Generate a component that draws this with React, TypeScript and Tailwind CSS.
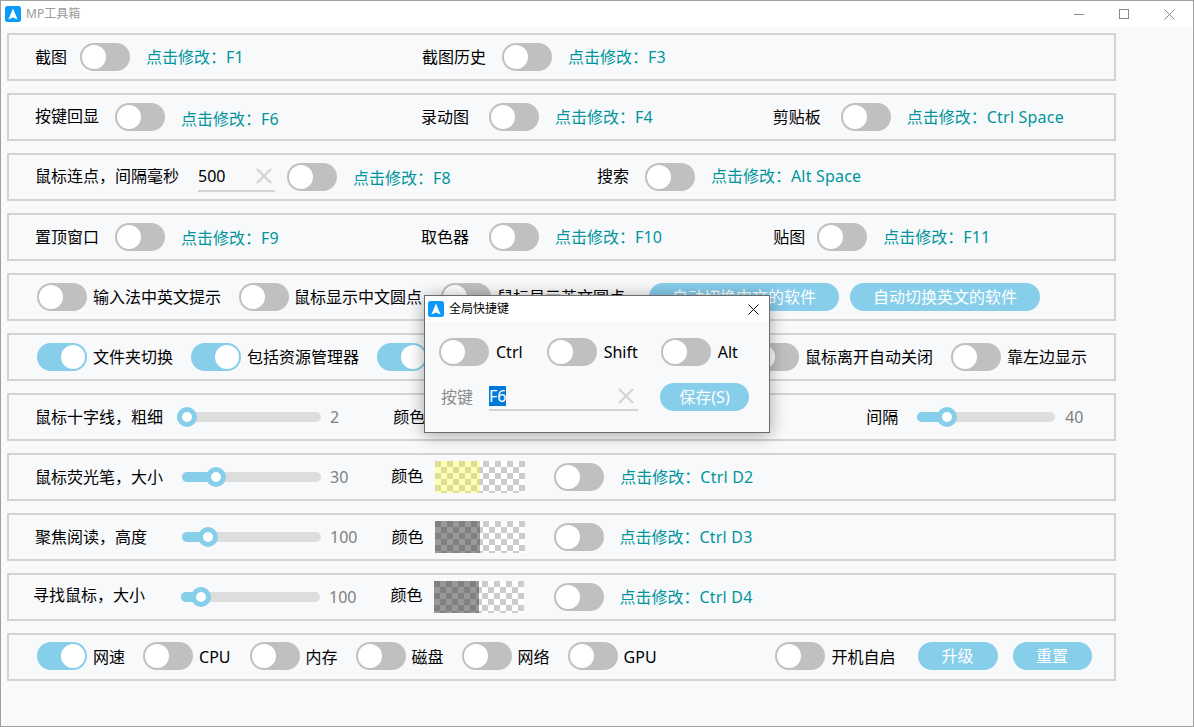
const font = { fontFamily: '"Noto Sans", "Noto Sans CJK SC", sans-serif' };

function Logo() {
  return (
    <svg viewBox="0 0 16 16" className="h-4 w-4 shrink-0">
      <rect width="16" height="16" rx="2.5" fill="#0a9bfa" />
      <path d="M8 2.5 L12.6 13.5 L8 11.6 L3.4 13.5 Z" fill="#fff" />
    </svg>
  );
}

function Toggle({ on = false, className = '' }: { on?: boolean; className?: string }) {
  if (on) {
    return (
      <div className={`flex h-[28px] w-[50px] shrink-0 items-center justify-end rounded-full bg-[#87ceeb] pr-[2px] ${className}`}>
        <div className="h-[24px] w-[24px] rounded-full bg-white" />
      </div>
    );
  }
  return (
    <div className={`flex h-[28px] w-[50px] shrink-0 items-center rounded-full bg-[#c0c0c0] pl-[2px] ${className}`}>
      <div className="h-[24px] w-[24px] rounded-full bg-white" />
    </div>
  );
}

function Label({ children, className = '' }: { children: React.ReactNode; className?: string }) {
  return <span className={`shrink-0 whitespace-nowrap text-[16px] leading-[22px] text-black ${className}`}>{children}</span>;
}

function HotKey({ children, className = '' }: { children: React.ReactNode; className?: string }) {
  return (
    <span className={`shrink-0 whitespace-nowrap text-[16px] leading-[22px] text-[#00959c] ${className}`}>
      点击修改：<span className="tracking-[0.2px]">{children}</span>
    </span>
  );
}

function Pill({ children, className = '' }: { children: React.ReactNode; className?: string }) {
  return (
    <div className={`flex h-[28px] shrink-0 items-center justify-center rounded-full bg-[#87ceeb] text-[16px] text-white ${className}`}>
      {children}
    </div>
  );
}

function Slider({ width, percent, className = '' }: { width: number; percent: number; className?: string }) {
  return (
    <div className={`relative h-[10px] shrink-0 rounded-full bg-[#dddddd] ${className}`} style={{ width }}>
      <div className="h-full rounded-full bg-[#87ceeb]" style={{ width: percent + 10 }} />
      <div
        className="absolute top-[-5px] h-[20px] w-[20px] rounded-full border-[5px] border-[#87ceeb] bg-white"
        style={{ left: percent }}
      />
    </div>
  );
}

function Swatch({ dark = false, yellow = false, className = '' }: { dark?: boolean; yellow?: boolean; className?: string }) {
  const left = yellow
    ? 'bg-[repeating-conic-gradient(#ffffb3_0_25%,#dddd99_0_50%)]'
    : dark
      ? 'bg-[repeating-conic-gradient(#999999_0_25%,#808080_0_50%)]'
      : '';
  return (
    <div className={`flex h-[32px] w-[90px] shrink-0 ${className}`}>
      <div className={`h-full w-[45px] bg-size-[12px_12px] ${left}`} />
      <div className="h-full w-[45px] bg-[repeating-conic-gradient(#cccccc_0_25%,#ffffff_0_50%)] bg-size-[12px_12px] [background-position:-3px_0]" />
    </div>
  );
}

function Row({ children }: { children: React.ReactNode }) {
  return (
    <div className="flex h-[48px] w-[1109px] items-center border-2 border-[#d3d3d6] pl-[27px]">
      {children}
    </div>
  );
}

function Cross({ className = '' }: { className?: string }) {
  return (
    <svg viewBox="0 0 16 16" className={`h-4 w-4 shrink-0 ${className}`} fill="none" stroke="#d3d3d3" strokeWidth="2.2">
      <path d="M1 1 L15 15 M15 1 L1 15" />
    </svg>
  );
}

function Dialog() {
  return (
    <div className="absolute left-[423px] top-[294px] h-[138px] w-[346px] border border-[#6b6b6b] bg-[#f8f9fb] shadow-[0_2px_16px_rgba(0,0,0,0.35)]">
      <div className="flex h-[26px] items-center bg-white pl-[3px] pr-[10px]">
        <Logo />
        <span className="ml-[5px] text-[12px] text-black">全局快捷键</span>
        <svg viewBox="0 0 11 11" className="ml-auto h-[11px] w-[11px]" fill="none" stroke="#111" strokeWidth="1">
          <path d="M0.5 0.5 L10.5 10.5 M10.5 0.5 L0.5 10.5" />
        </svg>
      </div>
      <div className="mt-[16px] flex items-center pl-[14px]">
        <Toggle />
        <Label className="ml-[7px]">Ctrl</Label>
        <Toggle className="ml-[24px]" />
        <Label className="ml-[7px]">Shift</Label>
        <Toggle className="ml-[23px]" />
        <Label className="ml-[7px]">Alt</Label>
      </div>
      <div className="mt-[16px] flex items-center pl-[16px]">
        <span className="text-[16px] leading-[22px] text-[#8a8a8a]">按键</span>
        <div className="ml-[16px] flex h-[29px] w-[149px] items-center border-b-2 border-[#d3d3d3]">
          <span className="bg-[#0078d7] text-[16px] leading-[20px] text-white">F6</span>
          <Cross className="ml-auto mr-[4px]" />
        </div>
        <Pill className="ml-[22px] w-[89px] text-[15px]">保存(S)</Pill>
      </div>
    </div>
  );
}

export default function App() {
  return (
    <div className="relative h-[727px] w-[1194px] overflow-hidden border border-[#a0a0a0] bg-[#f8f9fb]" style={font}>
      {/* title bar */}
      <div className="flex h-[26px] items-center bg-white pl-[4px] pr-[18px]">
        <Logo />
        <span className="ml-[5px] text-[12px] text-[#9a9a9a]">MP工具箱</span>
        <div className="ml-auto flex items-center gap-[35px]">
          <div className="h-px w-[10px] bg-[#8a8a8a]" />
          <div className="h-[10px] w-[10px] border border-[#8a8a8a]" />
          <svg viewBox="0 0 11 11" className="h-[11px] w-[11px]" fill="none" stroke="#8a8a8a" strokeWidth="1">
            <path d="M0.5 0.5 L10.5 10.5 M10.5 0.5 L0.5 10.5" />
          </svg>
        </div>
      </div>

      <div className="flex flex-col gap-[12px] pl-[6px] pt-[6px]">
        <Row>
          <Label className="ml-[-1px]">截图</Label>
          <Toggle className="ml-[13px]" />
          <HotKey className="ml-[16px]">F1</HotKey>
          <Label className="ml-[178px]">截图历史</Label>
          <Toggle className="ml-[16px]" />
          <HotKey className="ml-[16px]">F3</HotKey>
        </Row>
        <Row>
          <Label className="ml-[-1px] mb-[2px]">按键回显</Label>
          <Toggle className="ml-[16px]" />
          <HotKey className="ml-[16px] mt-[3px]">F6</HotKey>
          <Label className="ml-[142px]">录动图</Label>
          <Toggle className="ml-[20px]" />
          <HotKey className="ml-[16px]">F4</HotKey>
          <Label className="ml-[120px]">剪贴板</Label>
          <Toggle className="ml-[20px]" />
          <HotKey className="ml-[16px]">Ctrl Space</HotKey>
        </Row>
        <Row>
          <Label className="ml-[-1px] mb-[2px]">鼠标连点，间隔毫秒</Label>
          <div className="ml-[19px] flex h-[30px] w-[77px] shrink-0 items-center border-b-2 border-[#d3d3d3]">
            <span className="text-[16px] text-black">500</span>
            <Cross className="ml-auto mr-[3px]" />
          </div>
          <Toggle className="ml-[12px]" />
          <HotKey className="ml-[16px] mt-[2px]">F8</HotKey>
          <Label className="ml-[146px] mb-[2px]">搜索</Label>
          <Toggle className="ml-[16px]" />
          <HotKey className="ml-[16px] mb-[2px]">Alt Space</HotKey>
        </Row>
        <Row>
          <Label className="ml-[-1px]">置顶窗口</Label>
          <Toggle className="ml-[16px]" />
          <HotKey className="ml-[16px] mt-[2px]">F9</HotKey>
          <Label className="ml-[142px]">取色器</Label>
          <Toggle className="ml-[20px]" />
          <HotKey className="ml-[16px]">F10</HotKey>
          <Label className="ml-[111px]">贴图</Label>
          <Toggle className="ml-[12px]" />
          <HotKey className="ml-[16px]">F11</HotKey>
        </Row>
        <Row>
          <Toggle className="ml-[1px]" />
          <Label className="ml-[6px]">输入法中英文提示</Label>
          <Toggle className="ml-[18px]" />
          <Label className="ml-[5px]">鼠标显示中文圆点</Label>
          <Toggle className="ml-[19px]" />
          <Label className="ml-[6px]">鼠标显示英文圆点</Label>
          <Pill className="ml-[24px] w-[190px]">自动切换中文的软件</Pill>
          <Pill className="ml-[11px] w-[190px]">自动切换英文的软件</Pill>
        </Row>
        <Row>
          <Toggle on className="ml-[1px]" />
          <Label className="ml-[6px]">文件夹切换</Label>
          <Toggle on className="ml-[18px]" />
          <Label className="ml-[6px]">包括资源管理器</Label>
          <Toggle on className="ml-[18px]" />
          <Toggle className="ml-[322px]" />
          <Label className="ml-[6px]">鼠标离开自动关闭</Label>
          <Toggle className="ml-[18px]" />
          <Label className="ml-[6px]">靠左边显示</Label>
        </Row>
        <Row>
          <Label className="ml-[-1px]">鼠标十字线，粗细</Label>
          <Slider width={144} percent={0} className="ml-[14px]" />
          <span className="ml-[9px] text-[16px] text-[#808080]">2</span>
          <Label className="ml-[54px]">颜色</Label>
          <Label className="ml-[441px]">间隔</Label>
          <Slider width={138} percent={20} className="ml-[19px]" />
          <span className="ml-[10px] text-[16px] text-[#808080]">40</span>
        </Row>
        <Row>
          <Label className="ml-[-1px]">鼠标荧光笔，大小</Label>
          <Slider width={139} percent={24} className="ml-[19px]" />
          <span className="ml-[9px] text-[16px] text-[#808080]">30</span>
          <Label className="ml-[43px] mb-[2px]">颜色</Label>
          <Swatch yellow className="ml-[12px]" />
          <Toggle className="ml-[29px]" />
          <HotKey className="ml-[16px]">Ctrl D2</HotKey>
        </Row>
        <Row>
          <Label className="ml-[-1px]">聚焦阅读，高度</Label>
          <Slider width={139} percent={16} className="ml-[35px]" />
          <span className="ml-[9px] text-[16px] text-[#808080]">100</span>
          <Label className="ml-[34px]">颜色</Label>
          <Swatch dark className="ml-[11px]" />
          <Toggle className="ml-[29px]" />
          <HotKey className="ml-[16px]">Ctrl D3</HotKey>
        </Row>
        <Row>
          <Label className="ml-[-3px] mb-[4px]">寻找鼠标，大小</Label>
          <Slider width={139} percent={10} className="ml-[36px]" />
          <span className="ml-[9px] text-[16px] text-[#808080]">100</span>
          <Label className="ml-[34px] mb-[4px]">颜色</Label>
          <Swatch dark className="ml-[11px]" />
          <Toggle className="ml-[30px]" />
          <HotKey className="ml-[16px]">Ctrl D4</HotKey>
        </Row>
        <Row>
          <Toggle on className="ml-[1px] mb-[2px]" />
          <Label className="ml-[6px]">网速</Label>
          <Toggle className="ml-[18px] mb-[2px]" />
          <Label className="ml-[6px]">CPU</Label>
          <Toggle className="ml-[19px] mb-[2px]" />
          <Label className="ml-[6px]">内存</Label>
          <Toggle className="ml-[18px] mb-[2px]" />
          <Label className="ml-[6px]">磁盘</Label>
          <Toggle className="ml-[18px] mb-[2px]" />
          <Label className="ml-[6px]">网络</Label>
          <Toggle className="ml-[18px] mb-[2px]" />
          <Label className="ml-[6px]">GPU</Label>
          <Toggle className="ml-[118px] mb-[2px]" />
          <Label className="ml-[7px]">开机自启</Label>
          <Pill className="ml-[22px] w-[80px] mb-[2px]">升级</Pill>
          <Pill className="ml-[15px] w-[79px] mb-[2px]">重置</Pill>
        </Row>
      </div>

      <Dialog />
    </div>
  );
}
